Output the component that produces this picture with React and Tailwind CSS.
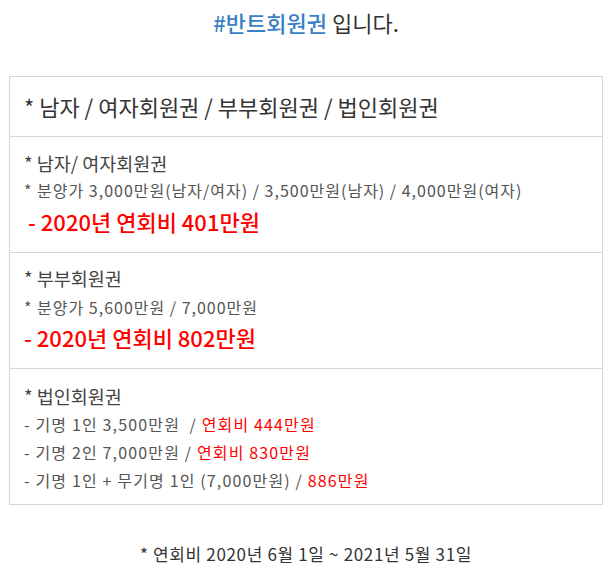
export default function App() {
  const font = { fontFamily: '"Noto Sans CJK KR", "Noto Sans", sans-serif' };
  return (
    <div className="w-[612px] h-[573px] bg-white text-[#333]" style={font}>
      <div className="pt-[8px] text-center text-[22px] leading-[28px]">
        <span className="text-[#3b7fc4] font-medium">#반트회원권</span> 입니다.
      </div>
      <div className="mx-[9px] mt-[40px] border border-[#d6d6d6]">
        <div className="px-[14px] h-[59px] flex items-center text-[22px] text-[#333]">
          * 남자 / 여자회원권 / 부부회원권 / 법인회원권
        </div>
        <div className="border-t border-[#d6d6d6] px-[14px] pt-[12px] h-[116px]">
          <div className="text-[18.5px] leading-[28px] text-[#444]">* 남자/ 여자회원권</div>
          <div className="text-[16px] leading-[26px] text-[#555] tracking-[1px]">
            * 분양가 3,000만원(남자/여자) / 3,500만원(남자) / 4,000만원(여자)
          </div>
          <div className="pl-[4px] text-[22px] leading-[36px] text-[#ff0000] font-medium">
            - 2020년 연회비 401만원
          </div>
        </div>
        <div className="border-t border-[#d6d6d6] px-[14px] pt-[11px] h-[116px]">
          <div className="text-[18.5px] leading-[28px] text-[#444]">* 부부회원권</div>
          <div className="text-[16px] leading-[30px] text-[#555] tracking-[1px]">* 분양가 5,600만원 / 7,000만원</div>
          <div className="text-[22px] leading-[30px] text-[#ff0000] font-medium">
            - 2020년 연회비 802만원
          </div>
        </div>
        <div className="border-t border-[#d6d6d6] px-[14px] pt-[13px] h-[136px] text-[16px] text-[#555] tracking-[1.15px]">
          <div className="text-[18.5px] leading-[28px] text-[#444] tracking-normal">* 법인회원권</div>
          <div className="leading-[28px]">
            - 기명 1인 3,500만원&nbsp; / <span className="text-[#ff0000]">연회비 444만원</span>
          </div>
          <div className="leading-[28px]">
            - 기명 2인 7,000만원 / <span className="text-[#ff0000]">연회비 830만원</span>
          </div>
          <div className="leading-[28px]">
            - 기명 1인 + 무기명 1인 (7,000만원) / <span className="text-[#ff0000]">886만원</span>
          </div>
        </div>
      </div>
      <div className="mt-[36px] text-center text-[17px] leading-[26px] text-[#333] tracking-[0.65px]">
        * 연회비 2020년 6월 1일 ~ 2021년 5월 31일
      </div>
    </div>
  );
}
